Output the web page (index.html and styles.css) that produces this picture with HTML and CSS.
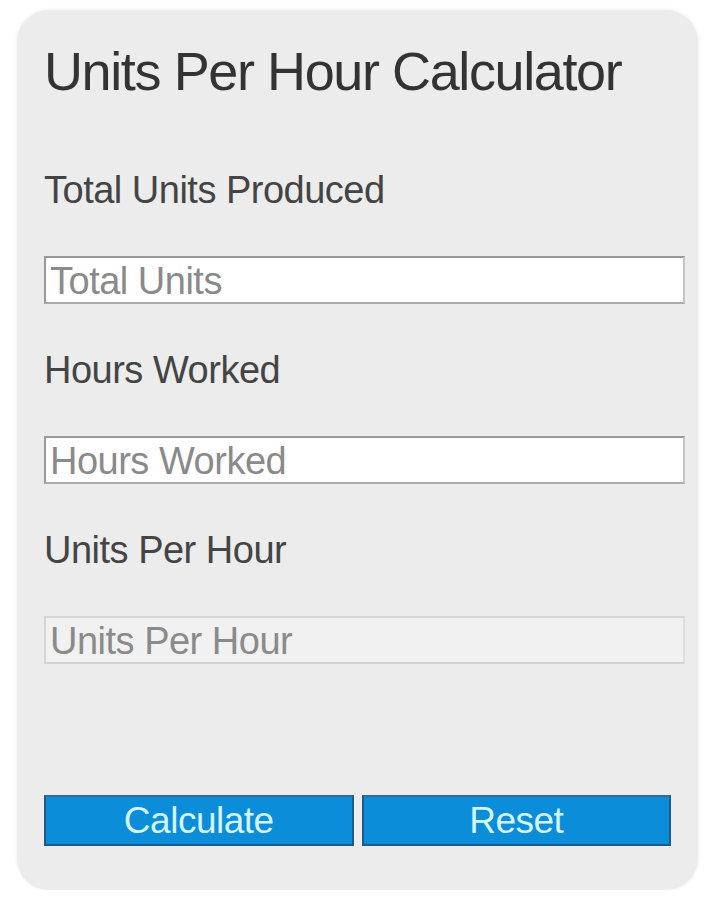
FILE: index.html
```html
<!DOCTYPE html>
<html lang="en">

<head>
    <meta charset="UTF-8">
    <meta name="viewport" content="width=device-width, initial-scale=1.0">
    <title>Units Per Hour Calculator</title>
    <link rel="stylesheet" href="styles.css">
</head>

<body>
    <div id="calc">
        <h1 class="calc-title">Units Per Hour Calculator</h1>

        <div class="field">
            <label for="units">Total Units Produced</label>
            <input type="text" id="units" placeholder="Total Units">
        </div>

        <div class="field">
            <label for="hours">Hours Worked</label>
            <input type="text" id="hours" placeholder="Hours Worked">
        </div>

        <div class="field">
            <label for="uph">Units Per Hour</label>
            <input type="text" id="uph" placeholder="Units Per Hour" readonly class="result">
        </div>

        <div class="buttons">
            <button type="button" onclick="calc()">Calculate</button>
            <button type="button" onclick="reset()">Reset</button>
        </div>
    </div>

    <script>
        function calc() {
            const u = parseFloat(document.getElementById('units').value),
                h = parseFloat(document.getElementById('hours').value);
            if (isNaN(u) || isNaN(h) || h === 0) return;
            document.getElementById('uph').value = (u / h).toFixed(2);
        }

        function reset() {
            ['units', 'hours', 'uph'].forEach(id => document.getElementById(id).value = '');
        }
    </script>
</body>

</html>
```

FILE: styles.css
```css
body {
    margin: 0;
    background: #fff;
    font-family: "Liberation Sans", Arial, sans-serif;
}

#calc {
    width: 641px;
    margin: 10px 0 0 17px;
    padding: 30px 13px 44px 27px;
    background: #ececec;
    border-radius: 32px;
    box-shadow: 0 0 4px rgba(0, 0, 0, 0.08);
}

.calc-title {
    margin: 0 0 66px;
    font-size: 54px;
    font-weight: normal;
    line-height: 62px;
    letter-spacing: -1.4px;
    color: #333;
}

.field {
    margin-bottom: 44px;
}

.field label {
    display: block;
    margin-bottom: 44px;
    font-size: 38px;
    line-height: 44px;
    letter-spacing: -0.5px;
    color: #444;
}

.field input {
    display: block;
    box-sizing: border-box;
    width: 641px;
    height: 48px;
    margin: 0;
    padding: 3px 4px 0;
    border: 2px solid;
    border-color: #9a9a9a #c6c6c6 #ababab #9a9a9a;
    border-radius: 0;
    background: #fff;
    font-family: inherit;
    font-size: 38px;
    letter-spacing: -0.5px;
    color: #555;
    outline: none;
}

.field input::placeholder {
    color: #8a8a8a;
}

.field input.result {
    background: #f1f1f1;
    border-color: #d6d6d6 #dedede #d2d2d2 #d6d6d6;
}

/* field margin collapses into this one */
.buttons {
    display: grid;
    grid-template-columns: 1fr 1fr;
    gap: 8px;
    width: 627px;
    margin-top: 131px;
}

.buttons button {
    height: 51px;
    margin: 0;
    padding: 0;
    border: 2px solid #1f5a80;
    border-top-color: #2c6f9a;
    border-radius: 0;
    background: #0b8dda;
    font-family: inherit;
    font-size: 37px;
    letter-spacing: -0.5px;
    line-height: 1;
    color: #d2f5ff;
    cursor: pointer;
}
```
